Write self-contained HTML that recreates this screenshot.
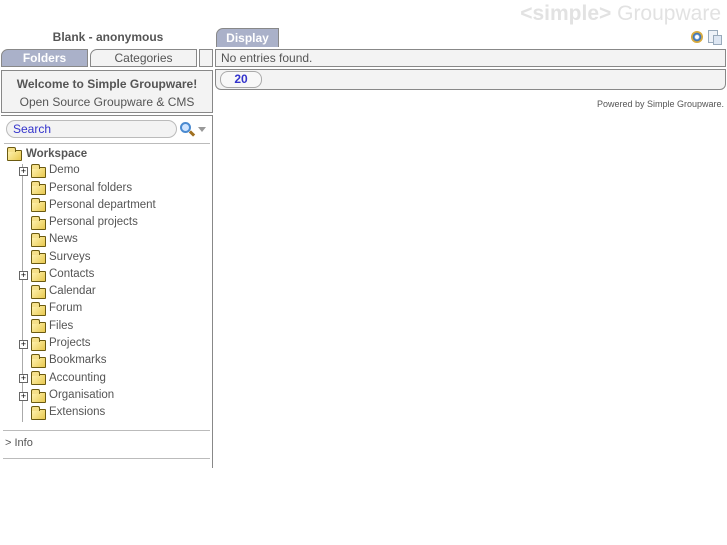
<!DOCTYPE html>
<html><head><style>
*{margin:0;padding:0;box-sizing:border-box}
body{width:727px;height:545px;background:#fff;font-family:"Liberation Sans",sans-serif;font-size:12px;color:#555;position:relative;overflow:hidden}
.a{position:absolute}
.tab{background:#aab1c9;color:#fff;font-weight:bold;text-align:center;border:1px solid #888;border-bottom:none;border-radius:7px 0 0 0}
.box{background:#f3f3f3;border:1px solid #888}
.fold{position:absolute;width:15px;height:11px;background:linear-gradient(135deg,#fff3b0,#e8c850);border:1px solid #6b5a10;border-radius:1px}
.fold:before{content:"";position:absolute;left:-1px;top:-4px;width:7px;height:4px;background:#f5e08a;border:1px solid #6b5a10;border-bottom:none;border-radius:2px 2px 0 0}
.plus{position:absolute;width:9px;height:9px;border:1px solid #666;background:#fff;font-size:9px;line-height:7px;text-align:center;color:#000}
.it{position:absolute;left:49px;font-size:11.5px;color:#555}
</style></head><body>
<div class="a" style="right:6px;top:2px;font-size:21px;color:#e2e2e2;font-weight:bold">&lt;simple&gt; <span style="font-weight:normal">Groupware</span></div>
<div class="a" style="left:0;width:216px;top:30px;text-align:center;font-weight:bold">Blank - anonymous</div>
<div class="a tab" style="left:216px;top:28px;width:63px;height:19px;line-height:18px">Display</div>
<div class="a" style="left:691px;top:31px;width:12px;height:12px;border-radius:50%;background:radial-gradient(circle,#fff 20%,#5a8fd0 30%,#3a6fb0 45%,#e0b040 55%,#c09020 100%)"></div>
<div class="a" style="left:708px;top:30px;width:10px;height:13px;border:1px solid #9ab;background:#eef2f8"></div>
<div class="a" style="left:713px;top:35px;width:9px;height:10px;border:1px solid #9ab;background:#dde6f2"></div>
<div class="a tab" style="left:1px;top:49px;width:87px;height:18px;line-height:17px;border:1px solid #888">Folders</div>
<div class="a" style="left:90px;top:49px;width:107px;height:18px;line-height:17px;border:1px solid #888;border-radius:7px 0 0 0;text-align:center;background:#f3f3f3">Categories</div>
<div class="a" style="left:199px;top:49px;width:14px;height:18px;border:1px solid #888;background:#f3f3f3"></div>
<div class="a box" style="left:215px;top:49px;width:511px;height:18px;line-height:16px;padding-left:5px">No entries found.</div>
<div class="a box" style="left:215px;top:69px;width:511px;height:21px;border-radius:0 0 6px 6px"></div>
<div class="a" style="left:220px;top:71px;width:42px;height:17px;border:1px solid #aaa;border-radius:8px;background:#f8f8f8;color:#33c;font-weight:bold;text-align:center;line-height:15px">20</div>
<div class="a" style="right:3px;top:99px;font-size:9px;color:#555">Powered by Simple Groupware.</div>
<div class="a box" style="left:1px;top:70px;width:212px;height:43px;text-align:center;padding-top:4px;line-height:18px"><b>Welcome to Simple Groupware!</b><br>Open Source Groupware &amp; CMS</div>
<div class="a" style="left:212px;top:115px;width:1px;height:353px;background:#888"></div>
<div class="a" style="left:1px;top:115px;width:212px;height:1px;background:#888"></div>
<div class="a" style="left:6px;top:120px;width:171px;height:18px;border:1px solid #bbb;border-radius:9px;background:#f3f3f3;color:#33c;padding-left:6px;line-height:16px">Search</div>
<div class="a" style="left:180px;top:122px;width:11px;height:11px;border-radius:50%;border:2px solid #4a8ad0;background:#cfe4ff"></div>
<div class="a" style="left:189px;top:132px;width:6px;height:3px;background:#a07020;transform:rotate(45deg)"></div>
<div class="a" style="left:198px;top:127px;width:0;height:0;border-left:4px solid transparent;border-right:4px solid transparent;border-top:5px solid #999"></div>
<div class="a" style="left:4px;top:143px;width:206px;height:1px;background:#bbb"></div>
<div class="fold" style="left:7px;top:150px"></div>
<div class="it" style="left:26px;top:148px;font-weight:bold">Workspace</div>
<div class="a" style="left:22px;top:164px;width:1px;height:258px;background:#aaa"></div>
<div class="plus" style="left:19px;top:167px">+</div><div class="fold" style="left:31px;top:167px"></div><div class="it" style="top:164px">Demo</div>
<div class="fold" style="left:31px;top:184px"></div><div class="it" style="top:182px">Personal folders</div>
<div class="fold" style="left:31px;top:201px"></div><div class="it" style="top:199px">Personal department</div>
<div class="fold" style="left:31px;top:219px"></div><div class="it" style="top:216px">Personal projects</div>
<div class="fold" style="left:31px;top:236px"></div><div class="it" style="top:233px">News</div>
<div class="fold" style="left:31px;top:253px"></div><div class="it" style="top:251px">Surveys</div>
<div class="plus" style="left:19px;top:271px">+</div><div class="fold" style="left:31px;top:271px"></div><div class="it" style="top:268px">Contacts</div>
<div class="fold" style="left:31px;top:288px"></div><div class="it" style="top:285px">Calendar</div>
<div class="fold" style="left:31px;top:305px"></div><div class="it" style="top:302px">Forum</div>
<div class="fold" style="left:31px;top:322px"></div><div class="it" style="top:320px">Files</div>
<div class="plus" style="left:19px;top:340px">+</div><div class="fold" style="left:31px;top:340px"></div><div class="it" style="top:337px">Projects</div>
<div class="fold" style="left:31px;top:357px"></div><div class="it" style="top:354px">Bookmarks</div>
<div class="plus" style="left:19px;top:374px">+</div><div class="fold" style="left:31px;top:374px"></div><div class="it" style="top:372px">Accounting</div>
<div class="plus" style="left:19px;top:392px">+</div><div class="fold" style="left:31px;top:392px"></div><div class="it" style="top:389px">Organisation</div>
<div class="fold" style="left:31px;top:409px"></div><div class="it" style="top:406px">Extensions</div>
<div class="a" style="left:3px;top:430px;width:207px;height:1px;background:#bbb"></div>
<div class="a" style="left:5px;top:437px;font-size:11px">&gt; Info</div>
<div class="a" style="left:3px;top:458px;width:207px;height:1px;background:#bbb"></div>
</body></html>
